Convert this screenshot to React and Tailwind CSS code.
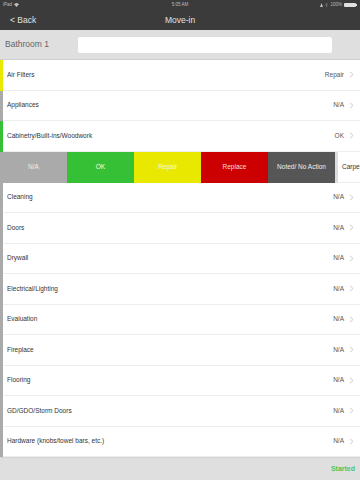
import React from 'react';

const rowsTop = [
  { label: 'Air Filters', value: 'Repair', stripe: 'bg-[#e8e800]' },
  { label: 'Appliances', value: 'N/A', stripe: 'bg-[#aaaaaa]' },
  { label: 'Cabinetry/Built-ins/Woodwork', value: 'OK', stripe: 'bg-[#35c035]' },
];

const rowsBottom = [
  'Cleaning',
  'Doors',
  'Drywall',
  'Electrical/Lighting',
  'Evaluation',
  'Fireplace',
  'Flooring',
  'GD/GDO/Storm Doors',
  'Hardware (knobs/towel bars, etc.)',
];

const actions = [
  { label: 'N/A', cls: 'bg-[#aaaaaa] text-[#eeeeee]' },
  { label: 'OK', cls: 'bg-[#35c035] text-[#f4fff4]' },
  { label: 'Repair', cls: 'bg-[#e8e800] text-[#fbfbd0]' },
  { label: 'Replace', cls: 'bg-[#cc0000] text-[#f8dddd]' },
  { label: 'Noted/ No Action', cls: 'bg-[#565656] text-[#eeeeee]' },
];

const Chevron = () => (
  <svg width="5" height="7" viewBox="0 0 5 7" className="ml-[5px]">
    <path d="M1 0.8 L4 3.5 L1 6.2" fill="none" stroke="#c4c4c4" strokeWidth="0.9" />
  </svg>
);

// --- Row ---
const Row = ({ label, value, stripe = 'bg-[#aaaaaa]' }) => (
  <div className="flex h-[30.5px] bg-white">
    <div className={`w-[3px] ${stripe}`} />
    <div className="flex-1 flex items-center justify-between pl-[4px] pr-[6px] border-b border-[#ededed]">
      <span className="text-[6.5px] text-[#333333]">{label}</span>
      <div className="flex items-center">
        <span className="text-[6.5px] text-[#555555]">{value}</span>
        <Chevron />
      </div>
    </div>
  </div>
);

// --- Swiped row ---
const SwipeRow = () => (
  <div className="flex h-[31px] bg-white overflow-hidden">
    {actions.map((a) => (
      <div key={a.label} className={`w-[67px] shrink-0 flex items-center justify-center text-[6.5px] ${a.cls}`}>
        {a.label}
      </div>
    ))}
    <div className="w-[3px] shrink-0 bg-[#dddddd]" />
    <div className="flex-1 flex items-center pl-[4px] border-b border-[#ededed] overflow-hidden">
      <span className="text-[6.5px] text-[#333333] whitespace-nowrap">Carpet</span>
    </div>
  </div>
);

const StatusBar = () => (
  <div className="h-[10px] flex items-center justify-between px-[3px] text-[4.5px] text-[#bdbdbd]">
    <div className="flex items-center gap-[2px] w-[80px]">
      <span>iPad</span>
      <svg width="5" height="4" viewBox="0 0 10 8">
        <path d="M5 8 L0 2.5 A7 7 0 0 1 10 2.5 Z" fill="#bdbdbd" />
      </svg>
    </div>
    <span>5:05 AM</span>
    <div className="flex items-center justify-end gap-[2px] w-[80px]">
      <svg width="3" height="4" viewBox="0 0 6 8">
        <path d="M0 8 L3 0 L6 8 Z" fill="#bdbdbd" />
      </svg>
      <svg width="3" height="4" viewBox="0 0 6 8">
        <path d="M1 2 L5 6 L3 8 L3 0 L5 2 L1 6" fill="none" stroke="#8a8a8a" strokeWidth="0.8" />
      </svg>
      <span>100%</span>
      <div className="flex items-center">
        <div className="w-[12px] h-[4px] bg-[#e0e0e0] rounded-[1px]" />
        <div className="w-[1px] h-[2px] bg-[#e0e0e0]" />
      </div>
    </div>
  </div>
);

export default function App() {
  return (
    <div className="w-[360px] h-[480px] flex flex-col overflow-hidden bg-white font-['Liberation_Sans',Arial,sans-serif]">
      <div className="bg-[#3b3b3b]">
        <StatusBar />
        <div className="h-[20px] flex items-center relative px-[10px]">
          <span className="text-[8.5px] text-[#e2e2e2]">&lt; Back</span>
          <span className="absolute left-0 right-0 text-center text-[8.5px] text-[#e2e2e2] pointer-events-none">Move-in</span>
        </div>
      </div>

      <div className="h-[30px] shrink-0 bg-[#dfdfdf] border-b border-[#cfcfcf] flex items-center pl-[5px] pr-[28px]">
        <span className="w-[73px] text-[8.5px] text-[#666666]">Bathroom 1</span>
        <div className="flex-1 h-[16px] bg-white rounded-[2px]" />
      </div>

      <div className="flex-1 flex flex-col bg-white overflow-hidden">
        {rowsTop.map((r) => (
          <Row key={r.label} label={r.label} value={r.value} stripe={r.stripe} />
        ))}
        <SwipeRow />
        {rowsBottom.map((l) => (
          <Row key={l} label={l} value="N/A" />
        ))}
      </div>

      <div className="h-[23px] shrink-0 bg-[#dfdfdf] border-t border-[#d2d2d2] flex items-center justify-end pr-[5px]">
        <span className="text-[7px] font-bold text-[#52c452]">Started</span>
      </div>
    </div>
  );
}
